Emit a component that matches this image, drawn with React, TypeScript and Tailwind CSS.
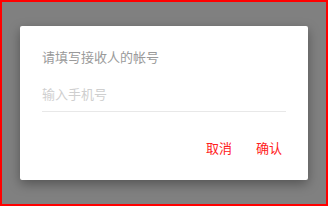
export default function App() {
  return (
    <div
      className="w-[328px] h-[206px] border-2 border-[#ff0000] bg-[#808080] flex items-center justify-center"
      style={{ fontFamily: '"Noto Sans CJK SC", "Noto Sans", sans-serif' }}
    >
      <div className="w-[288px] h-[154px] bg-white rounded-[2px] shadow-[0_4px_12px_rgba(0,0,0,0.35)] flex flex-col">
        <div className="pt-[21px] px-[22px]">
          <div className="text-[13px] leading-[20px] text-[#9a9a9a]">请填写接收人的帐号</div>
          <input
            className="mt-[13px] w-full h-[32px] pb-[4px] border-b border-[#e8e8e8] text-[13px] text-[#333] outline-none placeholder:text-[#cfcfcf]"
            placeholder="输入手机号"
          />
        </div>
        <div className="mt-[26px] flex justify-end gap-[24px] pr-[26px] text-[13px] leading-[20px] text-[#ff2020]">
          <button>取消</button>
          <button>确认</button>
        </div>
      </div>
    </div>
  );
}
